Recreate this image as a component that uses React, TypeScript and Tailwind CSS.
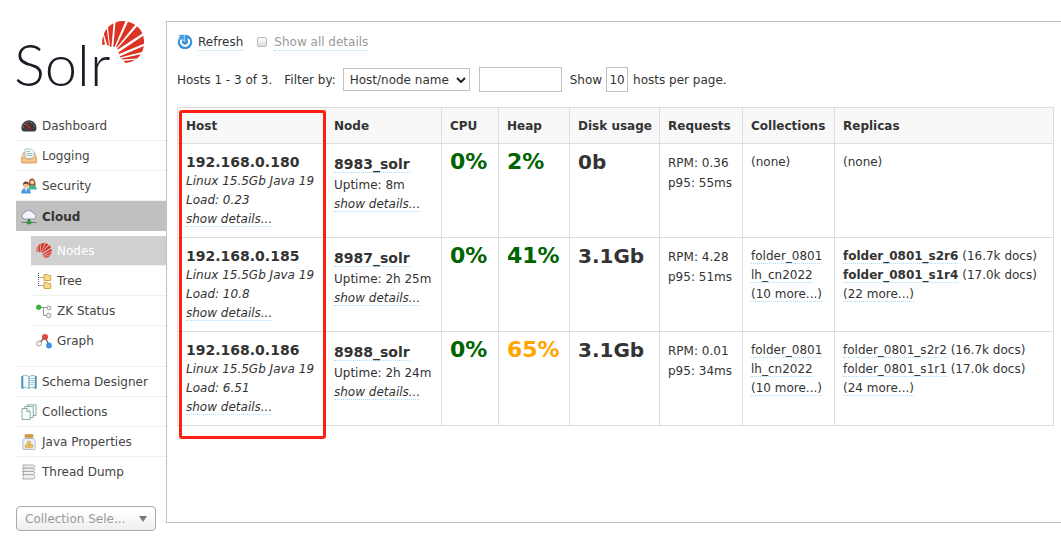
import React from "react";

type IconProps = { children: React.ReactNode };

function Icon({ children }: IconProps) {
  return (
    <svg viewBox="0 0 16 16" className="size-4 shrink-0" aria-hidden="true">
      {children}
    </svg>
  );
}

const gaugeIcon = (
  <Icon>
    <path d="M0.5 10.5C0.2 6 3.6 2.2 8 2.2s7.8 3.8 7.5 8.3c-.1 1.8-1 2.9-2.2 2.9H2.7c-1.2 0-2.1-1.100-2.200-2.900z" fill="#3c3c3f" />
    <path d="M2.200 9.500C2.500 6 5 4.200 8 4.200s5.500 1.800 5.800 5.300" fill="none" stroke="#9a9a9a" strokeWidth="1" strokeDasharray="1 1.600" />
    <path d="M4.500 5.500L9.500 11" stroke="#e02020" strokeWidth="1.200" />
    <circle cx="9.500" cy="11" r="1" fill="#a01010" />
  </Icon>
);

const inboxIcon = (
  <Icon>
    <path d="M2.500 4.500h11l2 5v4.500a1 1 0 0 1-1 1h-13a1 1 0 0 1-1-1V9.500z" fill="#f5d9ae" stroke="#d79a4e" strokeWidth=".8" />
    <path d="M4 1h6.500L13 3.500v6.800H4z" fill="#f7fbfb" stroke="#9fb9bd" strokeWidth=".8" />
    <path d="M5.500 3.500H9M5.500 5.500h6M5.500 7.500h6" stroke="#8fb3b5" strokeWidth=".9" />
    <path d="M.8 9.800h4l1 1.700h4.400l1-1.700h4v4.400H.8z" fill="#f3c98e" stroke="#d99a50" strokeWidth=".6" />
  </Icon>
);

const usersIcon = (
  <Icon>
    <path d="M8 8C7.500 3 8.400.5 11 .5S14.800 3 14.500 8z" fill="#9b5a34" />
    <circle cx="11.200" cy="4.200" r="2" fill="#f7c9a0" />
    <path d="M7.500 11.500c0-3.300 1.500-4.500 3.700-4.500s4.500 1.200 4.500 4.500z" fill="#49b08c" />
    <circle cx="5" cy="7.200" r="2.700" fill="#f3bf92" />
    <path d="M2 7.500C1.800 4.500 3 3.400 5 3.400s3.200 1.100 3 4L6.500 5.800 3.200 6z" fill="#6b3d22" />
    <path d="M.3 15.500c0-4 1.800-5.300 4.700-5.300s4.800 1.300 4.800 5.300z" fill="#4b96dc" />
    <path d="M3.800 10.200L5 14l1.200-3.800z" fill="#fff" />
  </Icon>
);

const cloudIcon = (
  <Icon>
    <path d="M3.500 10a3 3 0 0 1-.4-5.800A5 5 0 0 1 12 4a3.100 3.100 0 0 1 .8 6z" fill="#f3f4fb" stroke="#8b91b4" strokeWidth=".9" />
    <path d="M.5 13.500h15" stroke="#777" strokeWidth="1" />
    <path d="M8 10v2.500" stroke="#247a24" strokeWidth="1.500" />
    <rect x="6.200" y="12" width="3.600" height="3" rx=".6" fill="#2fae35" stroke="#13701a" strokeWidth=".5" />
  </Icon>
);

const treeIcon = (
  <Icon>
    <path d="M2.500 0v13M2.500 4.500h5M2.500 12.500h5" fill="none" stroke="#555" strokeWidth="1" strokeDasharray="1 1" />
    <path d="M8 1.500h3l.7 1h3v5H8zM8 9.500h3l.7 1h3v5H8z" fill="#f8dc86" stroke="#cf9d38" strokeWidth=".9" />
  </Icon>
);

const zkIcon = (
  <Icon>
    <path d="M5 4.500h6M7.500 4.500v8H11" fill="none" stroke="#999" strokeWidth="1" />
    <circle cx="2.700" cy="4.300" r="2.300" fill="#23c030" stroke="#118a1c" strokeWidth=".6" />
    <circle cx="13" cy="5" r="2" fill="#eee" stroke="#888" strokeWidth=".8" />
    <circle cx="12.700" cy="12.500" r="2.300" fill="#eee" stroke="#888" strokeWidth=".8" />
  </Icon>
);

const graphIcon = (
  <Icon>
    <path d="M3 10.500L9 4l4 8" fill="none" stroke="#555" strokeWidth="1.200" />
    <circle cx="9" cy="4" r="3" fill="#e04545" />
    <circle cx="3" cy="10.500" r="2.600" fill="#ececec" stroke="#8a8a8a" strokeWidth=".7" />
    <circle cx="13" cy="12.500" r="2.900" fill="#3d94e3" />
  </Icon>
);

const bookIcon = (
  <Icon>
    <path d="M.3 2h3v12.500h-3zM12.700 2h3v12.500h-3z" fill="#3f8fb5" />
    <path d="M2 1.500c2.500-.3 4.500 0 6 1.200 1.500-1.200 3.500-1.500 6-1.200v12c-2.500-.3-4.500 0-6 1-1.500-1-3.500-1.300-6-1z" fill="#f4fafb" stroke="#6da3b7" strokeWidth=".7" />
    <path d="M8 2.700v11.500" stroke="#4b86a0" strokeWidth=".9" />
    <path d="M9.500 4.500H13M9.500 6.500H13M9.500 8.500H13M9.500 10.500H12" stroke="#84b3c0" strokeWidth=".8" />
  </Icon>
);

const stackIcon = (
  <Icon>
    <g fill="#f8fcfb" stroke="#6b9690" strokeWidth=".8">
      <path d="M6.500.8H15v10.700H6.500z" />
      <path d="M3.800 2.500h8.500v11H3.800z" />
      <path d="M1 4.500h5L9.200 7.500v8H1z" />
      <path d="M6 4.500v3h3.200" />
    </g>
  </Icon>
);

const jarIcon = (
  <Icon>
    <path d="M3 4.500h10c1 1 1.200 2 1.200 3v7a1 1 0 0 1-1 1H2.800a1 1 0 0 1-1-1v-7c0-1 .2-2 1.200-3z" fill="#e8f0f7" stroke="#9fb3c7" strokeWidth=".8" />
    <rect x="4" y=".6" width="8" height="2.800" rx=".8" fill="#d69a3a" stroke="#a87420" strokeWidth=".5" />
    <g fill="#f3ca6a" stroke="#c98a23" strokeWidth=".6">
      <circle cx="8" cy="8.800" r="1.700" />
      <circle cx="6" cy="12.200" r="1.800" />
      <circle cx="10" cy="12.200" r="1.800" />
    </g>
  </Icon>
);

const threadIcon = (
  <Icon>
    <g fill="#f2f2f2" stroke="#999" strokeWidth=".8">
      <path d="M1.500 1h11l1.500 1.600-1.500 1.600h-11L3 2.600z" />
      <path d="M1.500 4.200h11L14 5.800l-1.500 1.600h-11L3 5.800z" />
      <path d="M1.500 7.400h11L14 9l-1.500 1.600h-11L3 9z" />
      <path d="M1.500 10.600h11l1.500 2.200-1.500 2.200h-11L3 12.800z" />
    </g>
  </Icon>
);

function Sun({ className }: { className: string }) {
  return (
    <svg viewBox="0 0 44 44" className={className} aria-hidden="true">
      <g fill="#db3424">
        <path d="M1.200 24A21 21 0 0 1 2.200 14.500L4 23.500z" />
        <path d="M2.800 12.800a21 21 0 0 1 3-5L8 25l-1.800-1z" />
        <path d="M7 6.300a21 21 0 0 1 5.500-4L10.500 25.500 9 26z" />
        <path d="M14.500 1.400a21 21 0 0 1 10-1.200L13.500 26l-1.200-.5z" />
        <path d="M27 .7a21 21 0 0 1 7.200 3L15.800 26.500 15 26z" />
        <path d="M36.200 5.200a21 21 0 0 1 5.200 7.300L17 28.500l-.8-.8z" />
        <path d="M42.200 14.800a21 21 0 0 1 .8 8L18 33l-.8-1.500z" />
        <path d="M42.800 25a21 21 0 0 1-1.800 6L19 36.500v-1.300z" />
        <path d="M39.800 33.300a21 21 0 0 1-3.500 4.200L21 38.500l-.5-1z" />
        <path d="M34.500 38.800a21 21 0 0 1-10 3.200L22.500 40z" />
      </g>
    </svg>
  );
}

const sunIcon = <Sun className="size-4 shrink-0" />;

type Item = { label: string; icon: React.ReactNode };

const topItems: Item[] = [
  { label: "Dashboard", icon: gaugeIcon },
  { label: "Logging", icon: inboxIcon },
  { label: "Security", icon: usersIcon },
];
const cloudItems: Item[] = [
  { label: "Tree", icon: treeIcon },
  { label: "ZK Status", icon: zkIcon },
  { label: "Graph", icon: graphIcon },
];
const bottomItems: Item[] = [
  { label: "Schema Designer", icon: bookIcon },
  { label: "Collections", icon: stackIcon },
  { label: "Java Properties", icon: jarIcon },
  { label: "Thread Dump", icon: threadIcon },
];

function NavLink({ label, icon }: Item) {
  return (
    <a href="#" className="flex h-[29px] items-center gap-[5px] pl-[5px] whitespace-nowrap">
      {icon}
      {label}
    </a>
  );
}

function Sidebar() {
  return (
    <aside className="ml-4 w-[150px] shrink-0 text-[#444]">
      <a href="#" className="relative -ml-0.5 block h-[90px] font-[Lato,sans-serif] text-[58px] leading-[86px] font-light text-[#1f1a26]">
        Solr
        <Sun className="absolute top-0 left-[87px] size-11" />
      </a>
      <nav>
        <ul className="divide-y divide-[#f0f0f0]">
          {topItems.map((item) => (
            <li key={item.label}>
              <NavLink {...item} />
            </li>
          ))}
          <li>
            <div className="bg-[#c0c0c0] pt-px font-bold text-[#333]">
              <NavLink label="Cloud" icon={cloudIcon} />
            </div>
            <ul className="mt-[5px] mb-[11px] divide-y divide-[#f0f0f0] pl-[15px]">
              <li className="bg-[#d0d0d0] text-white">
                <NavLink label="Nodes" icon={sunIcon} />
              </li>
              {cloudItems.map((item) => (
                <li key={item.label}>
                  <NavLink {...item} />
                </li>
              ))}
            </ul>
          </li>
          {bottomItems.map((item) => (
            <li key={item.label}>
              <NavLink {...item} />
            </li>
          ))}
        </ul>
      </nav>
      <div className="relative mt-5 mr-[10px]">
        <select
          aria-label="Collection selector"
          className="h-[25px] w-full appearance-none rounded border border-[#aaa] bg-linear-to-b from-white from-20% to-[#eee] pl-2 text-xs text-[#999]"
        >
          <option>Collection Sele...</option>
        </select>
        <svg viewBox="0 0 8 6" className="pointer-events-none absolute top-[10px] right-[9px] h-[6px] w-2" aria-hidden="true">
          <path d="M0 0h8L4 6z" fill="#777" />
        </svg>
      </div>
    </aside>
  );
}

function Dotted({ children, className = "" }: { children: React.ReactNode; className?: string }) {
  return (
    <a href="#" className={`border-b border-dotted border-[#a6e0f8] ${className}`}>
      {children}
    </a>
  );
}

type Row = {
  host: string;
  load: string;
  node: string;
  uptime: string;
  heap: string;
  warn?: boolean;
  disk: string;
  rpm: string;
  p95: string;
  collections: string[];
  replicas: { name: string; docs: string }[];
  leader?: boolean;
  more?: string;
};

const rows: Row[] = [
  { host: "192.168.0.180", load: "0.23", node: "8983_solr", uptime: "8m", heap: "2%", disk: "0b", rpm: "0.36", p95: "55ms", collections: [], replicas: [] },
  {
    host: "192.168.0.185", load: "10.8", node: "8987_solr", uptime: "2h 25m", heap: "41%", disk: "3.1Gb", rpm: "4.28", p95: "51ms",
    collections: ["folder_0801", "lh_cn2022", "(10 more...)"],
    replicas: [{ name: "folder_0801_s2r6", docs: "(16.7k docs)" }, { name: "folder_0801_s1r4", docs: "(17.0k docs)" }],
    leader: true,
    more: "(22 more...)",
  },
  {
    host: "192.168.0.186", load: "6.51", node: "8988_solr", uptime: "2h 24m", heap: "65%", warn: true, disk: "3.1Gb", rpm: "0.01", p95: "34ms",
    collections: ["folder_0801", "lh_cn2022", "(10 more...)"],
    replicas: [{ name: "folder_0801_s2r2", docs: "(16.7k docs)" }, { name: "folder_0801_s1r1", docs: "(17.0k docs)" }],
    more: "(24 more...)",
  },
];

const columns = [
  { label: "Host", width: "w-[148px]" },
  { label: "Node", width: "w-[116px]" },
  { label: "CPU", width: "w-[57px]" },
  { label: "Heap", width: "w-[71px]" },
  { label: "Disk usage", width: "w-[90px]" },
  { label: "Requests", width: "w-[83px]" },
  { label: "Collections", width: "w-[92px]" },
  { label: "Replicas", width: "" },
];

const cell = "border border-[#ddd] pl-2 pt-2 align-top";
const plainCell = "border border-[#ddd] pl-2 pt-[9px] align-top";

function HostTable() {
  return (
    <div className="relative mt-[15px]">
      <table className="w-full table-fixed border-collapse text-left whitespace-nowrap">
        <thead>
          <tr className="h-9 bg-[#f8f8f8]">
            {columns.map((c) => (
              <th key={c.label} className={`border border-[#ddd] pl-2 font-bold ${c.width}`}>
                {c.label}
              </th>
            ))}
          </tr>
        </thead>
        <tbody className="leading-[19px]">
          {rows.map((r) => (
            <tr key={r.host} className="h-[94px]">
              <td className={cell}>
                <div className="text-sm leading-5 font-bold">{r.host}</div>
                <div className="italic">Linux 15.5Gb Java 19</div>
                <div className="italic">Load: {r.load}</div>
                <div className="italic"><Dotted>show details...</Dotted></div>
              </td>
              <td className={cell}>
                <div className="text-sm leading-6 font-bold"><Dotted>{r.node}</Dotted></div>
                <div>Uptime: {r.uptime}</div>
                <div className="italic"><Dotted>show details...</Dotted></div>
              </td>
              <td className={`${cell} text-[22px] leading-5 font-bold text-[#006400]`}>0%</td>
              <td className={`${cell} text-[22px] leading-5 font-bold ${r.warn ? "text-[#ffa500]" : "text-[#006400]"}`}>{r.heap}</td>
              <td className={`${cell} text-xl leading-5 font-bold`}>{r.disk}</td>
              <td className={`${plainCell} leading-5`}>
                <div>RPM: {r.rpm}</div>
                <div>p95: {r.p95}</div>
              </td>
              <td className={plainCell}>
                {r.collections.length === 0 && "(none)"}
                {r.collections.map((c) => (
                  <div key={c}><Dotted>{c}</Dotted></div>
                ))}
              </td>
              <td className={plainCell}>
                {r.replicas.length === 0 && "(none)"}
                {r.replicas.map((p) => (
                  <div key={p.name}>
                    <Dotted className={r.leader ? "font-bold" : ""}>{p.name}</Dotted> {p.docs}
                  </div>
                ))}
                {r.more && <div><Dotted>{r.more}</Dotted></div>}
              </td>
            </tr>
          ))}
        </tbody>
      </table>
      <div className="pointer-events-none absolute top-[3px] -bottom-[13px] left-[2px] w-[147px] rounded-[3px] border-3 border-[#ff1f12]" />
    </div>
  );
}

export default function App() {
  return (
    <div className="flex items-start bg-white pt-[21px] font-['DejaVu_Sans',Verdana,sans-serif] text-xs text-[#333]">
      <Sidebar />
      <main className="min-w-0 grow border-y border-l border-[#c0c0c0] pt-[10px] pr-[7px] pb-24 pl-[10px]">
        <div className="flex h-5 items-center">
          <button type="button" className="flex items-center gap-[5px]">
            <Icon>
              <circle cx="8" cy="8" r="7.300" fill="#3b93dc" />
              <path d="M11 5a4 4 0 1 1-6.200.3" fill="none" stroke="#fff" strokeWidth="2" />
              <path d="M.5.5h7.200v7L5.500 5.300 3.800 6.800 1 4l1.800-1.600z" fill="#4a9fe0" stroke="#fff" strokeWidth=".6" />
            </Icon>
            <span className="border-b border-dotted border-[#a6e0f8] leading-4">Refresh</span>
          </button>
          <label className="ml-[14px] flex items-center gap-[7px] text-[#999]">
            <input type="checkbox" className="size-[10px] appearance-none rounded-[2px] border border-[#bbb] bg-linear-to-b from-white to-[#ddd]" />
            <span className="border-b border-dotted border-[#a6e0f8] leading-4">Show all details</span>
          </label>
        </div>
        <div className="mt-[15px] flex h-[25px] items-center whitespace-nowrap">
          <span>Hosts 1 - 3 of 3.</span>
          <label htmlFor="filter" className="ml-3">Filter by:</label>
          <span className="relative ml-[7px]">
            <select id="filter" className="h-[23px] w-[127px] appearance-none border border-[#c0c0c0] bg-white pl-[6px]">
              <option>Host/node name</option>
            </select>
            <svg viewBox="0 0 10 6" className="pointer-events-none absolute top-[9px] right-[4px] h-[6px] w-[10px]" aria-hidden="true">
              <path d="M1 1l4 4 4-4" fill="none" stroke="#222" strokeWidth="2" />
            </svg>
          </span>
          <input type="text" aria-label="Filter value" className="ml-[9px] h-[25px] w-[83px] border border-[#c0c0c0] px-1" />
          <label htmlFor="page-size" className="ml-2">Show</label>
          <input id="page-size" type="text" defaultValue="10" className="ml-1 h-[25px] w-[22px] border border-[#c0c0c0] text-center" />
          <span className="ml-[5px]">hosts per page.</span>
        </div>
        <HostTable />
      </main>
    </div>
  );
}
